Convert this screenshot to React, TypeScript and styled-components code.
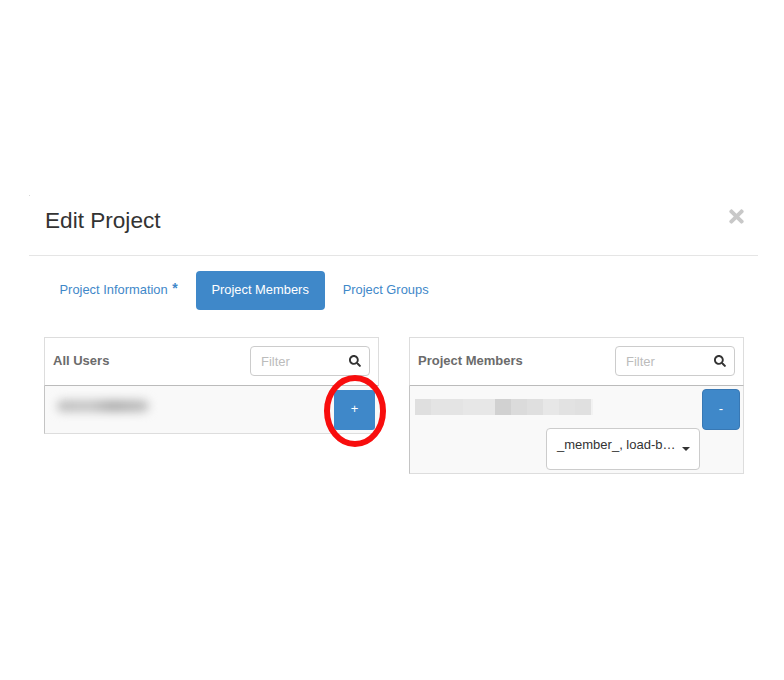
import React from "react";
import styled, { createGlobalStyle } from "styled-components";
import { FaSearch, FaTimes } from "react-icons/fa";

const pixelCells = [0.62, 0.5, 0.5, 0.42, 0.42, 0.95, 0.7, 0.62, 0.42, 0.55, 0.6];

const FilterBox = () => (
  <Filter>
    <FilterText>Filter</FilterText>
    <FaSearch size={12} color="#333" />
  </Filter>
);

export default function App() {
  return (
    <Page>
      <GlobalStyle />
      <Modal>
        <Header>
          <Title>Edit Project</Title>
          <Close>
            <FaTimes size={21} />
          </Close>
        </Header>
        <Body>
          <Pills>
            <Pill>
              Project Information<Star>*</Star>
            </Pill>
            <Pill $active>Project Members</Pill>
            <Pill>Project Groups</Pill>
          </Pills>
          <Columns>
            <Panel>
              <PanelHeader>
                <PanelTitle>All Users</PanelTitle>
                <FilterBox />
              </PanelHeader>
              <Row>
                <RowMain>
                  <BlurredName />
                  <AddButton>
                    <ButtonGlyph>+</ButtonGlyph>
                    <Callout viewBox="0 0 64 76" aria-hidden="true">
                      <ellipse cx="32" cy="39" rx="28" ry="33" fill="none" stroke="#f80d0d" strokeWidth="6" />
                    </Callout>
                  </AddButton>
                </RowMain>
              </Row>
            </Panel>
            <Panel>
              <PanelHeader>
                <PanelTitle>Project Members</PanelTitle>
                <FilterBox />
              </PanelHeader>
              <Row $rightEdge>
                <RowMain>
                  <PixelName>
                    {pixelCells.map((o, i) => (
                      <PixelCell key={i} style={{ opacity: o }} />
                    ))}
                    <PixelTail />
                  </PixelName>
                  <RemoveButton>
                    <ButtonGlyph>-</ButtonGlyph>
                  </RemoveButton>
                </RowMain>
                <RoleRow>
                  <RoleSelect>
                    <RoleText>_member_, load-b…</RoleText>
                    <Caret />
                  </RoleSelect>
                </RoleRow>
              </Row>
            </Panel>
          </Columns>
        </Body>
      </Modal>
    </Page>
  );
}

const GlobalStyle = createGlobalStyle`
  html, body {
    margin: 0;
    background: #fff;
  }
  body {
    font-family: "Liberation Sans", Arial, sans-serif;
    color: #333;
  }
`;

const Page = styled.div`
  width: 784px;
  height: 680px;
  padding: 195px 26px 0 29px;
  box-sizing: border-box;
  overflow: hidden;
`;

const Modal = styled.div`
  position: relative;
  width: 729px;

  &::before {
    content: "";
    position: absolute;
    left: 0;
    top: 0;
    width: 1px;
    height: 1px;
    background: #d8d8d8;
  }
`;

const Header = styled.div`
  display: flex;
  justify-content: space-between;
  align-items: flex-start;
  height: 60px;
  padding: 0 11px 0 16px;
  border-bottom: 1px solid #e5e5e5;
`;

const Title = styled.h4`
  margin: 11px 0 0;
  font-size: 22.6px;
  font-weight: 400;
  line-height: 29px;
  color: #333;
`;

const Close = styled.div`
  margin-top: 11px;
  color: #c8c8c8;
  line-height: 0;
`;

const Body = styled.div`
  padding: 15px 14px 0 15px;
`;

const Pills = styled.div`
  display: flex;
  gap: 3px;
  padding-left: 0.5px;
`;

const Pill = styled.div<{ $active?: boolean }>`
  height: 39px;
  width: ${(p) => (p.$active ? "129px" : "auto")};
  padding: 0 ${(p) => (p.$active ? "0" : "15px")} 2px;
  box-sizing: border-box;
  display: flex;
  align-items: center;
  justify-content: center;
  font-size: 12.9px;
  border-radius: 4px;
  color: ${(p) => (p.$active ? "#fff" : "#3f88c9")};
  background: ${(p) => (p.$active ? "#3f88c9" : "transparent")};
`;

const Star = styled.span`
  margin-left: 4.5px;
  margin-bottom: 4px;
  font-size: 14px;
  font-weight: 700;
`;

const Columns = styled.div`
  display: flex;
  gap: 30px;
  margin-top: 27px;
`;

const Panel = styled.div`
  width: 335px;
`;

const PanelHeader = styled.div`
  height: 47px;
  padding: 0 8px;
  display: flex;
  justify-content: space-between;
  align-items: center;
  border: 1px solid #ddd;
  border-bottom: 1px solid #bbb;
`;

const PanelTitle = styled.div`
  font-size: 13px;
  font-weight: 700;
  color: #6b6b6b;
  margin-top: -2px;
`;

const Filter = styled.div`
  width: 120px;
  height: 30px;
  box-sizing: border-box;
  margin-top: -1px;
  padding: 0 8px 0 10px;
  display: flex;
  justify-content: space-between;
  align-items: center;
  border: 1px solid #ccc;
  border-radius: 4px;
  background: #fff;
`;

const FilterText = styled.span`
  font-size: 13px;
  color: #bcbcbc;
`;

const Row = styled.div<{ $rightEdge?: boolean }>`
  min-height: 44px;
  padding-top: 3px;
  background: #f9f9f9;
  border-bottom: 1px solid #ddd;
  border-left: 1px solid #c4c4c4;
  border-right: 1px solid ${(p) => (p.$rightEdge ? "#ddd" : "transparent")};
`;

const RowMain = styled.div`
  display: flex;
  justify-content: space-between;
  align-items: flex-start;
  padding: 0 3px 0 5px;
`;

const BlurredName = styled.div`
  width: 92px;
  height: 12px;
  margin: 11px 0 0 7px;
  border-radius: 6px;
  background: linear-gradient(90deg, #bdbdbd, #c6c6c6 35%, #adadad 60%, #c0c0c0);
  filter: blur(5px);
`;

const PixelName = styled.div`
  display: flex;
  margin-top: 10px;
`;

const PixelCell = styled.div`
  width: 16px;
  height: 16px;
  background: #cfcfcf;
`;

const PixelTail = styled.div`
  width: 2px;
  height: 16px;
  background: #f2f2f2;
`;

const AddButton = styled.div`
  position: relative;
  width: 41px;
  height: 40px;
  margin-top: 1px;
  display: flex;
  align-items: center;
  justify-content: center;
  background: #3f88c9;
  border-radius: 3px;
`;

const ButtonGlyph = styled.span`
  margin-bottom: 3px;
  color: #fff;
  font-size: 13px;
`;

const Callout = styled.svg`
  position: absolute;
  left: -11px;
  top: -18px;
  width: 64px;
  height: 76px;
`;

const RemoveButton = styled.div`
  width: 38px;
  height: 41px;
  display: flex;
  align-items: center;
  justify-content: center;
  background: #3f88c9;
  border: 1px solid #3878b4;
  box-sizing: border-box;
  border-radius: 4px;
`;

const RoleRow = styled.div`
  display: flex;
  justify-content: flex-end;
  padding: 0 43px 3px 0;
  margin-top: -2px;
`;

const RoleSelect = styled.div`
  width: 154px;
  height: 42px;
  box-sizing: border-box;
  padding: 0 9px 0 10px;
  display: flex;
  justify-content: space-between;
  border: 1px solid #ccc;
  border-radius: 4px;
  background: #fff;
`;

const RoleText = styled.span`
  font-size: 13px;
  line-height: 31px;
  color: #333;
  white-space: nowrap;
`;

const Caret = styled.span`
  width: 0;
  height: 0;
  margin-top: 18px;
  border-left: 4px solid transparent;
  border-right: 4px solid transparent;
  border-top: 4px solid #333;
`;
